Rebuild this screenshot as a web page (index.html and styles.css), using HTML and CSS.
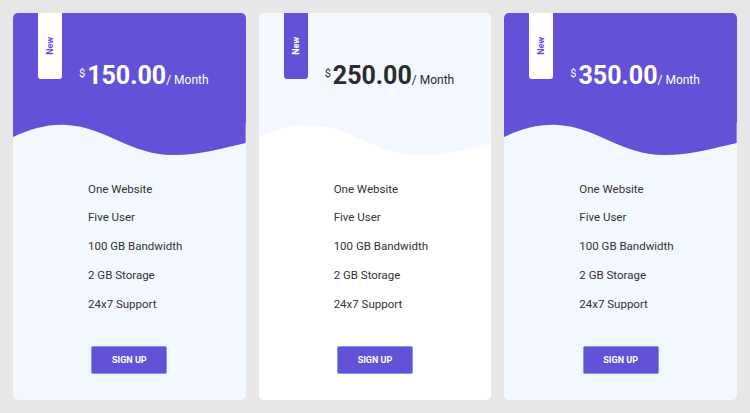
FILE: index.html
```html
<!DOCTYPE html>
<html>
<head>
<meta charset="utf-8">
<link rel="stylesheet" href="styles.css">
</head>
<body>
<div class="plans">
  <div class="card card-accent">
    <div class="ribbon"><span>New</span></div>
    <div class="head">
      <div class="price"><span class="cur">$</span><span class="amount">150.00</span><span class="per">/ Month</span></div>
    </div>
    <svg class="wave" viewBox="0 0 233 34" preserveAspectRatio="none"><path d="M0 14 C18 6 34 1 54 2 C92 4 118 32 160 32 C190 32 214 24 233 20 V0 H0 Z"/></svg>
    <ul class="features">
      <li>One Website</li>
      <li>Five User</li>
      <li>100 GB Bandwidth</li>
      <li>2 GB Storage</li>
      <li>24x7 Support</li>
    </ul>
    <div class="action"><button class="btn">SIGN UP</button></div>
  </div>
  <div class="card card-light">
    <div class="ribbon"><span>New</span></div>
    <div class="head">
      <div class="price"><span class="cur">$</span><span class="amount">250.00</span><span class="per">/ Month</span></div>
    </div>
    <svg class="wave" viewBox="0 0 233 34" preserveAspectRatio="none"><path d="M0 14 C18 6 34 1 54 2 C92 4 118 32 160 32 C190 32 214 24 233 20 V0 H0 Z"/></svg>
    <ul class="features">
      <li>One Website</li>
      <li>Five User</li>
      <li>100 GB Bandwidth</li>
      <li>2 GB Storage</li>
      <li>24x7 Support</li>
    </ul>
    <div class="action"><button class="btn">SIGN UP</button></div>
  </div>
  <div class="card card-accent">
    <div class="ribbon"><span>New</span></div>
    <div class="head">
      <div class="price"><span class="cur">$</span><span class="amount">350.00</span><span class="per">/ Month</span></div>
    </div>
    <svg class="wave" viewBox="0 0 233 34" preserveAspectRatio="none"><path d="M0 14 C18 6 34 1 54 2 C92 4 118 32 160 32 C190 32 214 24 233 20 V0 H0 Z"/></svg>
    <ul class="features">
      <li>One Website</li>
      <li>Five User</li>
      <li>100 GB Bandwidth</li>
      <li>2 GB Storage</li>
      <li>24x7 Support</li>
    </ul>
    <div class="action"><button class="btn">SIGN UP</button></div>
  </div>
</div>
</body>
</html>
```
FILE: styles.css
```css
* { box-sizing: border-box; }
html, body { margin: 0; padding: 0; }
body {
  background: #e7e7e7;
  font-family: Roboto, "Liberation Sans", sans-serif;
  color: #333;
  width: 750px;
  height: 413px;
  overflow: hidden;
}
.plans {
  display: grid;
  grid-template-columns: repeat(3, 1fr);
  gap: 13px;
  padding: 13px;
}
.card {
  position: relative;
  height: 387px;
  border-radius: 5px;
  overflow: hidden;
}
.card-accent { background: #f3f7fe; }
.card-light { background: #ffffff; }
.head {
  height: 110px;
  padding: 50px 0 0 66px;
}
.card-accent .head { background: #6352d7; }
.card-light .head { background: #f3f7fe; }
.wave {
  display: block;
  width: 100%;
  height: 34px;
}
.card-accent .wave path { fill: #6352d7; }
.card-light .wave path { fill: #f3f7fe; }
.price {
  line-height: 26px;
  white-space: nowrap;
}
.cur {
  font-size: 11px;
  vertical-align: top;
  line-height: 22px;
  margin-right: 2px;
}
.amount {
  font-size: 25px;
  font-weight: 700;
}
.per {
  font-size: 12px;
}
.card-accent .price { color: #ffffff; }
.card-light .price { color: #2b2b2b; }
.ribbon {
  position: absolute;
  top: 0;
  left: 25px;
  width: 24px;
  height: 66px;
  border-radius: 0 0 3px 3px;
  display: flex;
  align-items: center;
  justify-content: center;
}
.card-accent .ribbon { background: #ffffff; color: #6352d7; }
.card-light .ribbon { background: #6352d7; color: #ffffff; }
.ribbon span {
  writing-mode: vertical-rl;
  transform: rotate(180deg);
  font-size: 9px;
  font-weight: 700;
}
.features {
  list-style: none;
  margin: 0;
  padding: 17.5px 0 0 75px;
  font-size: 11.5px;
  line-height: 28.75px;
  color: #333;
}
.action {
  display: flex;
  justify-content: center;
  margin-top: 27.5px;
}
.btn {
  width: 76px;
  height: 28px;
  background: #6352d7;
  border: 1px solid #7f97f0;
  border-radius: 2px;
  color: #ffffff;
  font-family: Roboto, "Liberation Sans", sans-serif;
  font-size: 9px;
  font-weight: 700;
  padding: 0;
}
```
